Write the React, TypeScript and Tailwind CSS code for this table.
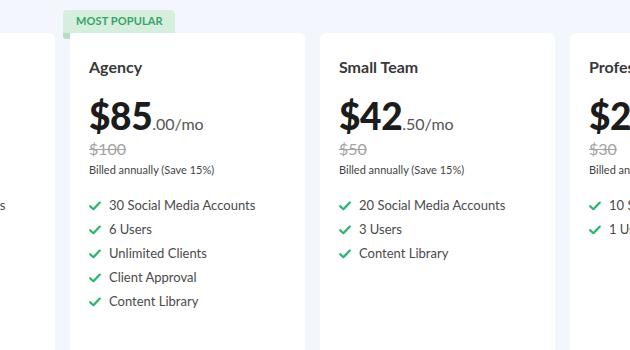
type Plan = {
  name: string;
  whole: string;
  cents: string;
  was: string;
  features: string[];
  popular?: boolean;
};

const plans: Plan[] = [
  {
    name: 'Enterprise',
    whole: '$170',
    cents: '.00/mo',
    was: '$200',
    features: ['50 Social Media Accounts', '12 Users', 'Unlimited Clients', 'Client Approval', 'Content Library'],
  },
  {
    name: 'Agency',
    whole: '$85',
    cents: '.00/mo',
    was: '$100',
    features: ['30 Social Media Accounts', '6 Users', 'Unlimited Clients', 'Client Approval', 'Content Library'],
    popular: true,
  },
  {
    name: 'Small Team',
    whole: '$42',
    cents: '.50/mo',
    was: '$50',
    features: ['20 Social Media Accounts', '3 Users', 'Content Library'],
  },
  {
    name: 'Professional',
    whole: '$25',
    cents: '.50/mo',
    was: '$30',
    features: ['10 Social Media Accounts', '1 User'],
  },
];

function Check() {
  return (
    <svg width="12" height="10" viewBox="0 0 12 10" className="shrink-0">
      <path d="M1.2 5.2 L4.4 8.2 L10.8 1.6" fill="none" stroke="#27b46b" strokeWidth="2.2" strokeLinecap="round" strokeLinejoin="round" />
    </svg>
  );
}

function PlanCard({ plan }: { plan: Plan }) {
  return (
    <div className="relative w-[235px] shrink-0">
      {plan.popular ? (
        <div className="absolute -top-[23px] -left-[7px] flex flex-col">
          <div className="flex h-[23px] w-[112px] items-center rounded-t-[4px] bg-[#d6eedd] pl-[13px] text-[11px] font-bold tracking-[0.01em] text-[#34a46a]">
            MOST POPULAR
          </div>
          <div className="h-[6px] w-[7px] rounded-bl-[3px] bg-[#b9dcc5]" />
        </div>
      ) : null}
      <div className="relative min-h-[330px] rounded-[6px] bg-white px-[19px] pt-[24px]">
        <h2 className="text-[16px] leading-[20px] font-bold text-[#383838]">{plan.name}</h2>
        <div className="mt-[19px] flex items-baseline whitespace-nowrap">
          <span className="text-[37px] leading-[40px] font-black tracking-[-0.01em] text-[#1c1c1c]">{plan.whole}</span>
          <span className="text-[16px] text-[#555]">{plan.cents}</span>
        </div>
        <div className="mt-[3px] text-[16px] leading-[20px] text-[#a3a3a3] line-through">{plan.was}</div>
        <div className="mt-[4px] text-[11px] leading-[14px] whitespace-nowrap text-[#444]">Billed annually (Save 15%)</div>
        <ul className="mt-[17px] flex flex-col">
          {plan.features.map((f) => (
            <li key={f} className="flex h-[24px] items-center gap-[8px] whitespace-nowrap text-[13px] text-[#4a4a4a]">
              <Check />
              <span>{f}</span>
            </li>
          ))}
        </ul>
      </div>
    </div>
  );
}

export default function App() {
  return (
    <div
      className="h-[350px] w-[630px] overflow-hidden bg-[#f3f7fd]"
      style={{ fontFamily: 'Lato, "Liberation Sans", sans-serif' }}
    >
      <div className="ml-[-180px] flex gap-[15px] pt-[33px]">
        {plans.map((p) => (
          <PlanCard key={p.name} plan={p} />
        ))}
      </div>
    </div>
  );
}
